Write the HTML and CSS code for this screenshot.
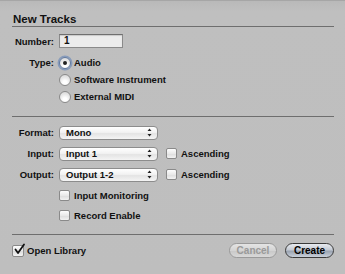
FILE: index.html
```html
<!DOCTYPE html>
<html>
<head>
<meta charset="utf-8">
<link rel="stylesheet" href="styles.css">
</head>
<body>
<div class="dialog">
  <div class="title">New Tracks</div>

  <div class="row row-number">
    <span class="label">Number:</span>
    <div class="textfield">1</div>
  </div>

  <div class="radios">
    <div class="row row-radio">
      <span class="label">Type:</span>
      <span class="radio checked focus"></span>
      <span class="text">Audio</span>
    </div>
    <div class="row row-radio">
      <span class="label"></span>
      <span class="radio"></span>
      <span class="text">Software Instrument</span>
    </div>
    <div class="row row-radio">
      <span class="label"></span>
      <span class="radio"></span>
      <span class="text">External MIDI</span>
    </div>
  </div>

  <div class="sep sep-mid"></div>

  <div class="row row-popup">
    <span class="label">Format:</span>
    <div class="popup"><span class="ptext">Mono</span>
      <svg class="arrows" width="5" height="9" viewBox="0 0 5 9"><path d="M2.5 0.5 L4.5 3 L0.5 3 Z M0.5 6 L4.5 6 L2.5 8.5 Z" fill="#222"/></svg>
    </div>
  </div>
  <div class="row row-popup">
    <span class="label">Input:</span>
    <div class="popup"><span class="ptext">Input 1</span>
      <svg class="arrows" width="5" height="9" viewBox="0 0 5 9"><path d="M2.5 0.5 L4.5 3 L0.5 3 Z M0.5 6 L4.5 6 L2.5 8.5 Z" fill="#222"/></svg>
    </div>
    <span class="checkbox asc"></span>
    <span class="text">Ascending</span>
  </div>
  <div class="row row-popup">
    <span class="label">Output:</span>
    <div class="popup"><span class="ptext">Output 1-2</span>
      <svg class="arrows" width="5" height="9" viewBox="0 0 5 9"><path d="M2.5 0.5 L4.5 3 L0.5 3 Z M0.5 6 L4.5 6 L2.5 8.5 Z" fill="#222"/></svg>
    </div>
    <span class="checkbox asc"></span>
    <span class="text">Ascending</span>
  </div>

  <div class="row row-check">
    <span class="label"></span>
    <span class="checkbox"></span>
    <span class="text">Input Monitoring</span>
  </div>
  <div class="row row-check">
    <span class="label"></span>
    <span class="checkbox"></span>
    <span class="text">Record Enable</span>
  </div>

  <div class="sep sep-bottom"></div>

  <div class="footer">
    <span class="checkbox checked">
      <svg width="13" height="13" viewBox="0 0 13 13"><path d="M2.5 6.5 L5 10 L11 1.5" fill="none" stroke="#111" stroke-width="1.8" stroke-linecap="round" stroke-linejoin="round"/></svg>
    </span>
    <span class="text">Open Library</span>
    <span class="spacer"></span>
    <button class="btn cancel">Cancel</button>
    <button class="btn create">Create</button>
  </div>
</div>
</body>
</html>
```

FILE: styles.css
```css
html, body {
  margin: 0;
  padding: 0;
}
body {
  width: 345px;
  height: 274px;
  overflow: hidden;
  background: #bebebe;
  font-family: "Liberation Sans", Arial, sans-serif;
  font-weight: bold;
  font-size: 9.5px;
  color: #111;
}
.dialog {
  box-sizing: border-box;
  height: 274px;
  padding: 0 11px 0 12px;
  border-top: 1px solid #a6a6a6;
  background: linear-gradient(#b9b9b9, #bfbfbf 10px, #bebebe);
}
.title {
  height: 26px;
  box-sizing: border-box;
  padding: 12px 0 0 1px;
  font-size: 11.5px;
  border-bottom: 1px solid #6e6e6e;
}
.row {
  display: flex;
  align-items: center;
}
.label {
  width: 42px;
  flex: none;
  text-align: right;
  margin-right: 5px;
}
.row-number {
  margin-top: 7px;
  height: 14px;
}
.textfield {
  box-sizing: border-box;
  width: 64px;
  height: 14px;
  border: 1px solid #8a8a8a;
  border-top-color: #6f6f6f;
  background: #ececec;
  box-shadow: inset 0 1px 1px rgba(0,0,0,0.15);
  padding-left: 4px;
  line-height: 12px;
  font-size: 10px;
}
.radios {
  margin-top: 6px;
}
.row-radio {
  height: 17px;
}
.radio {
  box-sizing: border-box;
  width: 12px;
  height: 12px;
  border-radius: 50%;
  border: 1px solid #8a8a8a;
  background: radial-gradient(circle at 50% 75%, #ffffff 20%, #e6e6e6 60%, #d2d2d2);
  margin-right: 3px;
  flex: none;
  position: relative;
}
.radio.focus {
  border-color: #5e78a0;
  box-shadow: 0 0 0 1.5px rgba(105, 135, 185, 0.65);
}
.radio.checked::after {
  content: "";
  position: absolute;
  left: 3px;
  top: 3px;
  width: 4px;
  height: 4px;
  border-radius: 50%;
  background: #222;
}
.sep {
  height: 1px;
  background: #6e6e6e;
}
.sep-mid {
  margin-top: 11px;
}
.sep-mid + .row-popup {
  margin-top: 5px;
}
.row-popup {
  height: 21px;
}
.popup {
  box-sizing: border-box;
  width: 99px;
  height: 14px;
  border: 1px solid #8c8c8c;
  border-radius: 4px;
  background: linear-gradient(#ffffff, #f2f2f2 45%, #e4e4e4 55%, #f4f4f4);
  display: flex;
  align-items: center;
  padding: 0 5px 0 6px;
  flex: none;
}
.ptext {
  flex: 1;
}
.arrows {
  display: block;
}
.checkbox {
  box-sizing: border-box;
  width: 11px;
  height: 11px;
  border: 1px solid #8a8a8a;
  border-radius: 2px;
  background: linear-gradient(#fdfdfd, #e9e9e9 50%, #dedede 55%, #f2f2f2);
  margin-right: 4px;
  flex: none;
  position: relative;
}
.checkbox.asc {
  margin-left: 8px;
}
.row-check {
  height: 20px;
}
.row-check .checkbox {
  margin-right: 4px;
}
.sep-bottom {
  margin-top: 9px;
}
.footer {
  height: 31px;
  display: flex;
  align-items: center;
}
.footer .checkbox {
  width: 12px;
  height: 12px;
  margin-right: 3px;
}
.checkbox.checked svg {
  position: absolute;
  left: -0.5px;
  top: -3px;
}
.spacer {
  flex: 1;
}
.btn {
  box-sizing: border-box;
  height: 15px;
  width: 48px;
  border-radius: 8px;
  font-family: "Liberation Sans", Arial, sans-serif;
  font-weight: bold;
  font-size: 10px;
  padding: 0;
  line-height: 13px;
  margin-left: 8px;
}
.cancel {
  border: 1px solid #9a9a9a;
  color: #9a9a9a;
  background: linear-gradient(#e4e4e4, #d4d4d4 50%, #c9c9c9 55%, #d8d8d8);
}
.create {
  width: 49px;
  border: 1px solid #3a3a3a;
  color: #000;
  background: linear-gradient(#e8ebf0, #c4cad3 45%, #9aa3b1 55%, #c9d0da);
}
```
